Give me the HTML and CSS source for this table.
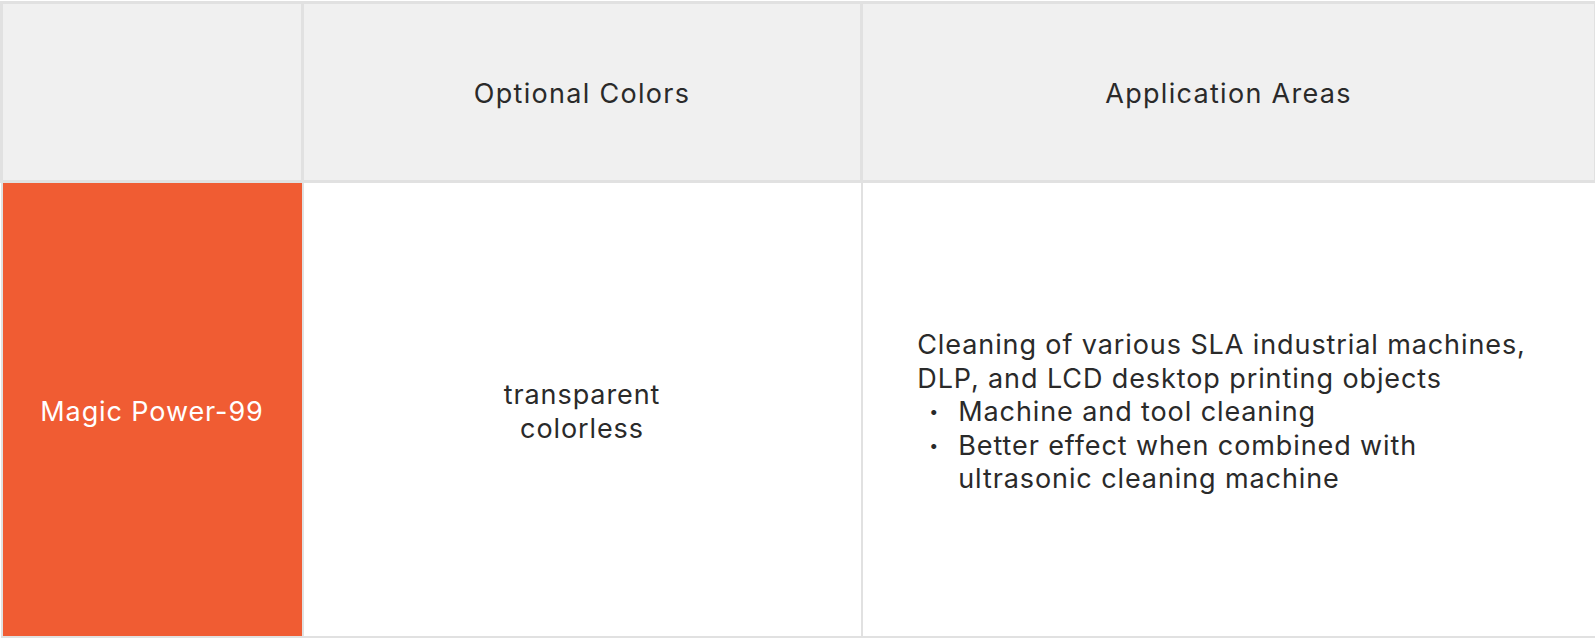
FILE: index.html
```html
<!DOCTYPE html>
<html lang="en">
<head>
<meta charset="utf-8">
<title>Magic Power-99</title>
<link rel="stylesheet" href="styles.css">
</head>
<body>
<table class="spec">
  <colgroup>
    <col class="col-name">
    <col class="col-colors">
    <col class="col-areas">
  </colgroup>
  <thead>
    <tr class="head-row">
      <th></th>
      <th>Optional Colors</th>
      <th>Application Areas</th>
    </tr>
  </thead>
  <tbody>
    <tr class="body-row">
      <td class="name">Magic Power-99</td>
      <td class="colors">transparent<br>colorless</td>
      <td class="areas">
        <div class="areas-text">
          <p>Cleaning of various SLA industrial machines,<br>DLP, and LCD desktop printing objects</p>
          <ul>
            <li>Machine and tool cleaning</li>
            <li>Better effect when combined with<br>ultrasonic cleaning machine</li>
          </ul>
        </div>
      </td>
    </tr>
  </tbody>
</table>
</body>
</html>
```

FILE: styles.css
```css
html, body {
  margin: 0;
  padding: 0;
  background: #ffffff;
}

body {
  font-family: Inter, "Noto Sans", "Liberation Sans", sans-serif;
  color: #2a2a2a;
  padding-top: 1px;
}

.spec {
  border-collapse: collapse;
  table-layout: fixed;
  width: 1594px;
}

.col-name { width: 301px; }
.col-colors { width: 559px; }
.col-areas { width: 734px; }

.spec th,
.spec td {
  border: 2px solid #e1e1e1;
  font-size: 27px;
  line-height: 33.5px;
  letter-spacing: 0.9px;
  text-align: center;
  vertical-align: middle;
  padding: 5px 0 0;
}

.spec th {
  background: #f0f0f0;
  font-weight: 400;
  border-width: 3px;
  letter-spacing: 1.3px;
  padding-top: 4px;
}

.head-row { height: 179px; }
.body-row { height: 455px; }

.name {
  background: #f05c33;
  color: #ffffff;
}

.areas-text {
  display: inline-block;
  text-align: left;
  margin-left: -14px;
}

.areas-text p {
  margin: 0;
}

.areas-text ul {
  margin: 0;
  padding: 0 0 0 41px;
  list-style: none;
}

.areas-text li {
  position: relative;
}

.areas-text li::before {
  content: "\2022";
  position: absolute;
  left: -29px;
  font-size: 16px;
}
```
